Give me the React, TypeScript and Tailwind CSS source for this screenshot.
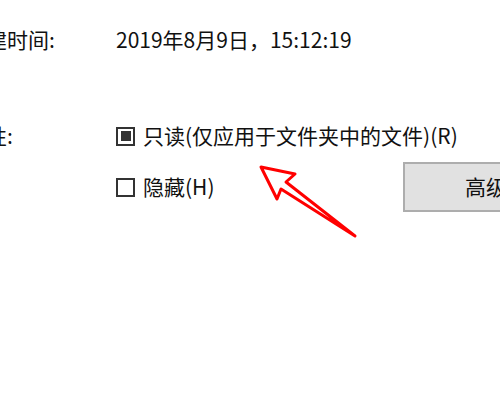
import React from "react";

const font = { fontFamily: '"Microsoft YaHei", "Noto Sans CJK SC", "Noto Sans", sans-serif' };

export default function App() {
  return (
    <div className="relative w-[500px] h-[400px] overflow-hidden bg-white text-[#111]" style={font}>
      <div className="ml-[-35px] flex flex-col">
        <div className="flex items-center h-[30px] mt-[25px] text-[21px]">
          <div className="w-[151px] shrink-0">创建时间:</div>
          <div>2019年8月9日，15:12:19</div>
        </div>
        <div className="flex items-center h-[30px] mt-[66px] text-[21px]">
          <div className="w-[151px] shrink-0">属性:</div>
          <div className="flex items-center">
            <div className="w-[19px] h-[19px] border-2 border-[#333] flex items-center justify-center">
              <div className="w-[10px] h-[10px] bg-[#333]" />
            </div>
            <span className="ml-[8px]">只读(仅应用于文件夹中的文件)(R)</span>
          </div>
        </div>
        <div className="flex items-center mt-[11px] text-[21px]">
          <div className="w-[151px] shrink-0" />
          <div className="flex items-center h-[50px] flex-1">
            <div className="w-[19px] h-[19px] border-2 border-[#333]" />
            <span className="ml-[8px]">隐藏(H)</span>
            <div className="ml-auto mr-[-100px] w-[197px] h-[50px] bg-[#e1e1e1] border-2 border-[#adadad] flex items-center pl-[60px]">
              高级(D)...
            </div>
          </div>
        </div>
      </div>
      <svg className="absolute left-0 top-0" width="500" height="400" viewBox="0 0 500 400">
        <path
          d="M261 167 L295 174 L286 182 L355 236 L281 189 L277 199 Z"
          fill="none"
          stroke="#ff0000"
          strokeWidth="3"
          strokeLinejoin="round"
        />
      </svg>
    </div>
  );
}
